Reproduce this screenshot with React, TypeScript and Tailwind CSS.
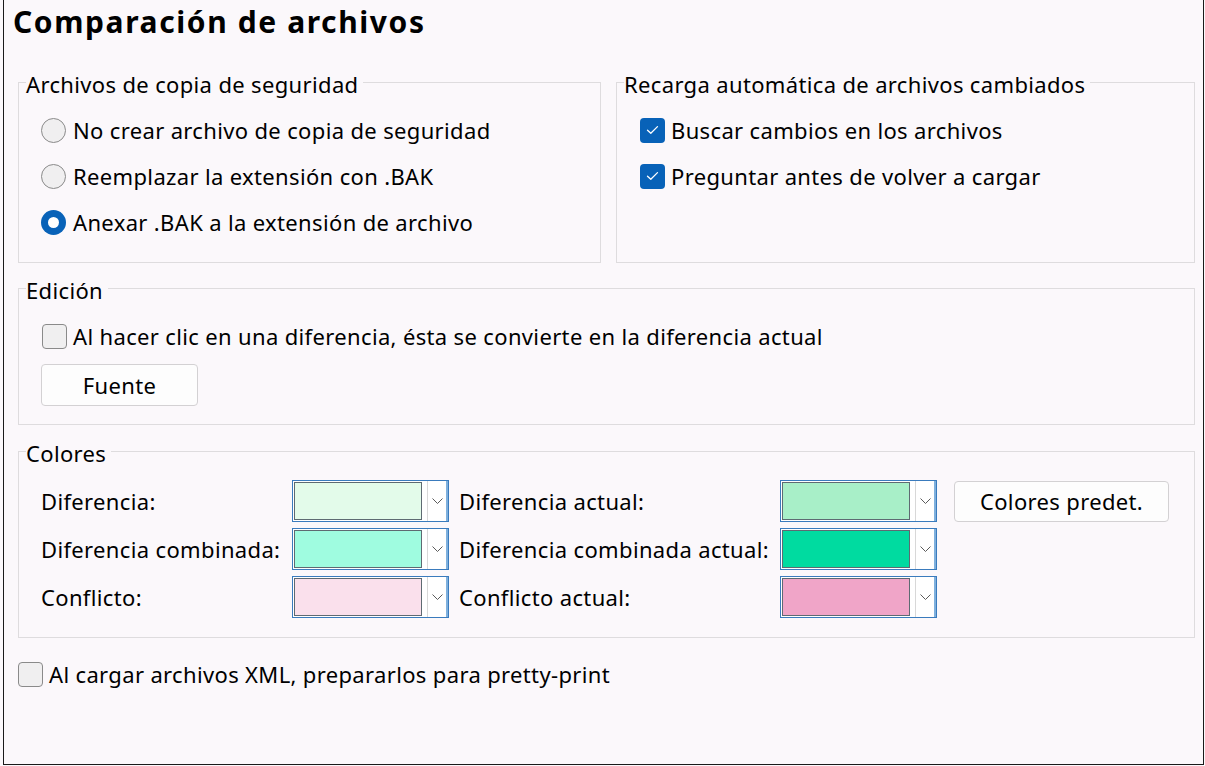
import React from 'react'

const swatchColors = {
  diff: '#e3fbea',
  merged: '#9ffce0',
  conflict: '#fae0ec',
  diffCur: '#a8efc8',
  mergedCur: '#00dba0',
  conflictCur: '#f0a5c8',
}

function Radio({ checked, label }: { checked?: boolean; label: string }) {
  return (
    <div className="flex h-[46px] items-center gap-[7px] ml-[15px]">
      {checked ? (
        <span className="flex h-[25px] w-[25px] items-center justify-center rounded-full bg-[#0862b8]">
          <span className="h-[11px] w-[11px] rounded-full bg-white" />
        </span>
      ) : (
        <span className="h-[25px] w-[25px] rounded-full border border-[#8a8a8a] bg-[#f0eff0]" />
      )}
      <span>{label}</span>
    </div>
  )
}

function Check({ checked, label, className = '' }: { checked?: boolean; label: string; className?: string }) {
  return (
    <div className={`flex h-[46px] items-center gap-[6px] ${className}`}>
      {checked ? (
        <span className="flex h-[25px] w-[25px] items-center justify-center rounded-[4px] bg-[#0862b8]">
          <svg width="13" height="10" viewBox="0 0 13 10" fill="none">
            <path d="M1.5 5.2 L4.8 8.3 L11.5 1.6" stroke="white" strokeWidth="1.3" strokeLinecap="round" strokeLinejoin="round" />
          </svg>
        </span>
      ) : (
        <span className="h-[25px] w-[25px] rounded-[4px] border border-[#8a8a8a] bg-[#f0eff0]" />
      )}
      <span>{label}</span>
    </div>
  )
}

function ColorCombo({ color }: { color: string }) {
  return (
    <div className="flex h-[42px] w-[157px] border border-[#3a7bbd] bg-white">
      <div className="p-px">
        <div className="h-[38px] w-[128px] border border-[#5e6a72]" style={{ backgroundColor: color }} />
      </div>
      <div className="ml-[4px] flex flex-1 items-center justify-center border-l border-[#d8d8d8] border-r-2 border-r-[#7fb0dd]">
        <svg width="11" height="6" viewBox="0 0 11 6" fill="none">
          <path d="M0.5 0.5 L5.5 5.5 L10.5 0.5" stroke="#5a5a5a" strokeWidth="1" />
        </svg>
      </div>
    </div>
  )
}

function Group({ title, className = '', children }: { title: string; className?: string; children: React.ReactNode }) {
  return (
    <fieldset className={`border border-[#dedcde] px-[7px] ${className}`}>
      <legend className="pr-[5px] pt-[4px] leading-[22px]">{title}</legend>
      {children}
    </fieldset>
  )
}

export default function App() {
  return (
    <div className="h-[766px] w-[1205px] bg-[#fbf8fb] font-['Noto_Sans',sans-serif] text-[22px] tracking-[0.35px] text-black">
      <div className="ml-[3px] flex h-[765px] w-[1201px] flex-col border-x border-b border-[#1a1a1a] pl-[14px] pr-[8px]">
        <h1 className="-ml-[5px] pt-[2px] text-[30px] font-bold leading-[40px] tracking-[1.6px]">Comparación de archivos</h1>

        <div className="mt-[27px] grid grid-cols-[583px_579px] gap-x-[15px]">
          <Group title="Archivos de copia de seguridad" className="h-[194px]">
            <div className="pt-[12px]">
              <Radio label="No crear archivo de copia de seguridad" />
              <Radio label="Reemplazar la extensión con .BAK" />
              <Radio checked label="Anexar .BAK a la extensión de archivo" />
            </div>
          </Group>
          <Group title="Recarga automática de archivos cambiados" className="h-[194px]">
            <div className="pt-[12px]">
              <Check checked label="Buscar cambios en los archivos" className="ml-[16px]" />
              <Check checked label="Preguntar antes de volver a cargar" className="ml-[16px]" />
            </div>
          </Group>
        </div>

        <Group title="Edición" className="mt-[12px] h-[150px]">
          <div className="pt-[12px]">
            <Check label="Al hacer clic en una diferencia, ésta se convierte en la diferencia actual" className="ml-[16px]" />
            <button className="ml-[15px] mt-[5px] h-[42px] w-[157px] rounded-[4px] border border-[#d3d1d3] bg-[#fdfdfd]">
              Fuente
            </button>
          </div>
        </Group>

        <Group title="Colores" className="mt-[13px] h-[200px]">
          <div className="ml-[15px] flex flex-col gap-[6px] pt-[16px]">
            <div className="flex items-center">
              <span className="w-[251px]">Diferencia:</span>
              <ColorCombo color={swatchColors.diff} />
              <span className="ml-[10px] w-[321px]">Diferencia actual:</span>
              <ColorCombo color={swatchColors.diffCur} />
              <button className="ml-[17px] h-[41px] w-[215px] rounded-[4px] border border-[#d3d1d3] bg-[#fdfdfd]">
                Colores predet.
              </button>
            </div>
            <div className="flex items-center">
              <span className="w-[251px]">Diferencia combinada:</span>
              <ColorCombo color={swatchColors.merged} />
              <span className="ml-[10px] w-[321px]">Diferencia combinada actual:</span>
              <ColorCombo color={swatchColors.mergedCur} />
            </div>
            <div className="flex items-center">
              <span className="w-[251px]">Conflicto:</span>
              <ColorCombo color={swatchColors.conflict} />
              <span className="ml-[10px] w-[321px]">Conflicto actual:</span>
              <ColorCombo color={swatchColors.conflictCur} />
            </div>
          </div>
        </Group>

        <Check label="Al cargar archivos XML, prepararlos para pretty-print" className="mt-[13px]" />
      </div>
    </div>
  )
}
